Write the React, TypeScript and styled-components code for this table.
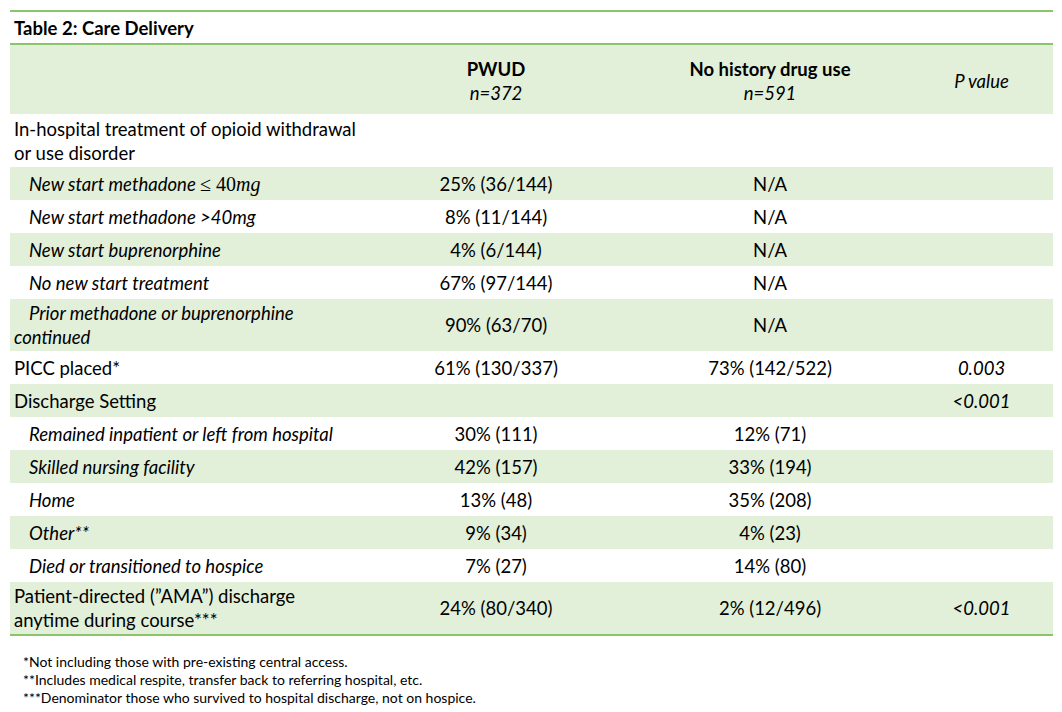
import React from "react";
import styled, { createGlobalStyle } from "styled-components";

const GREEN_LINE = "#8cc46c";
const BAND = "#e2efd9";
const COLS = "362px 248px 300px 133px";

const Global = createGlobalStyle`
  html, body { margin: 0; padding: 0; background: #ffffff; }
  body { font-family: Lato, "Open Sans", sans-serif; color: #000; }
`;

const Page = styled.div`
  padding: 10px 0 0 10px;
`;

const Table = styled.div`
  width: 1043px;
`;

const TitleBar = styled.div`
  height: 31px;
  border-top: 2px solid ${GREEN_LINE};
  border-bottom: 2px solid ${GREEN_LINE};
  display: flex;
  align-items: center;
  padding-left: 4px;
  font-size: 18.5px;
  font-weight: 700;
`;

const Row = styled.div<{ $band?: boolean; $h?: number; $last?: boolean }>`
  display: grid;
  grid-template-columns: ${COLS};
  background: ${(p) => (p.$band ? BAND : "#ffffff")};
  min-height: ${(p) => p.$h ?? 33}px;
  border-bottom: ${(p) => (p.$last ? `2px solid ${GREEN_LINE}` : "none")};
  font-size: 18.5px;
  line-height: 24px;
`;

const Label = styled.div<{ $sub?: boolean }>`
  display: flex;
  align-items: center;
  padding: 2px 2px 2px 4px;
  font-style: ${(p) => (p.$sub ? "italic" : "normal")};
  text-indent: ${(p) => (p.$sub ? "15px" : "0")};
`;

const Cell = styled.div<{ $italic?: boolean; $pr?: number }>`
  display: flex;
  align-items: center;
  justify-content: center;
  text-align: center;
  padding-right: ${(p) => p.$pr ?? 0}px;
  font-style: ${(p) => (p.$italic ? "italic" : "normal")};
`;

const HeadCell = styled.div<{ $pr?: number }>`
  display: flex;
  flex-direction: column;
  align-items: center;
  justify-content: center;
  padding-right: ${(p) => p.$pr ?? 0}px;
  padding-top: 2px;
`;

const HeadTitle = styled.span`
  font-weight: 700;
`;

const HeadSub = styled.span`
  font-style: italic;
`;

const MathExpr = styled.span`
  font-family: "Liberation Serif", "DejaVu Serif", serif;
  font-style: normal;
  font-size: 20px;
`;

const MathVar = styled.span`
  font-style: italic;
`;

const Notes = styled.div`
  padding: 17px 0 0 13px;
  font-size: 14px;
  line-height: 18px;
`;

type DataRow = {
  label: React.ReactNode;
  sub?: boolean;
  a?: string;
  b?: string;
  p?: string;
  h?: number;
};

const rows: DataRow[] = [
  { label: "In-hospital treatment of opioid withdrawal or use disorder", h: 53 },
  {
    label: (
      <span>
        New start methadone{" "}
        <MathExpr>
          {"\u2264 40"}
          <MathVar>mg</MathVar>
        </MathExpr>
      </span>
    ),
    sub: true,
    a: "25% (36/144)",
    b: "N/A",
  },
  { label: "New start methadone >40mg", sub: true, a: "8% (11/144)", b: "N/A" },
  { label: "New start buprenorphine", sub: true, a: "4% (6/144)", b: "N/A" },
  { label: "No new start treatment", sub: true, a: "67% (97/144)", b: "N/A" },
  {
    label: "Prior methadone or buprenorphine continued",
    sub: true,
    a: "90% (63/70)",
    b: "N/A",
    h: 52,
  },
  { label: "PICC placed*", a: "61% (130/337)", b: "73% (142/522)", p: "0.003" },
  { label: "Discharge Setting", p: "<0.001" },
  { label: "Remained inpatient or left from hospital", sub: true, a: "30% (111)", b: "12% (71)" },
  { label: "Skilled nursing facility", sub: true, a: "42% (157)", b: "33% (194)" },
  { label: "Home", sub: true, a: "13% (48)", b: "35% (208)" },
  { label: "Other**", sub: true, a: "9% (34)", b: "4% (23)" },
  { label: "Died or transitioned to hospice", sub: true, a: "7% (27)", b: "14% (80)" },
  {
    label: (
      <>
        {"Patient-directed (\u201DAMA\u201D) discharge"}
        <br />
        {"anytime during course***"}
      </>
    ),
    a: "24% (80/340)",
    b: "2% (12/496)",
    p: "<0.001",
    h: 52,
  },
];

export default function App() {
  return (
    <>
      <Global />
      <Page>
        <Table>
          <TitleBar>Table 2: Care Delivery</TitleBar>
          <Row $band $h={69}>
            <Label />
            <HeadCell>
              <HeadTitle>PWUD</HeadTitle>
              <HeadSub>n=372</HeadSub>
            </HeadCell>
            <HeadCell>
              <HeadTitle>No history drug use</HeadTitle>
              <HeadSub>n=591</HeadSub>
            </HeadCell>
            <HeadCell $pr={10}>
              <HeadSub>P value</HeadSub>
            </HeadCell>
          </Row>
          {rows.map((r, i) => (
            <Row key={i} $band={i % 2 === 1} $h={r.h} $last={i === rows.length - 1}>
              <Label $sub={r.sub}>
                <div>{r.label}</div>
              </Label>
              <Cell>{r.a}</Cell>
              <Cell>{r.b}</Cell>
              <Cell $italic $pr={10}>
                {r.p}
              </Cell>
            </Row>
          ))}
        </Table>
        <Notes>
          <div>*Not including those with pre-existing central access.</div>
          <div>**Includes medical respite, transfer back to referring hospital, etc.</div>
          <div>***Denominator those who survived to hospital discharge, not on hospice.</div>
        </Notes>
      </Page>
    </>
  );
}
